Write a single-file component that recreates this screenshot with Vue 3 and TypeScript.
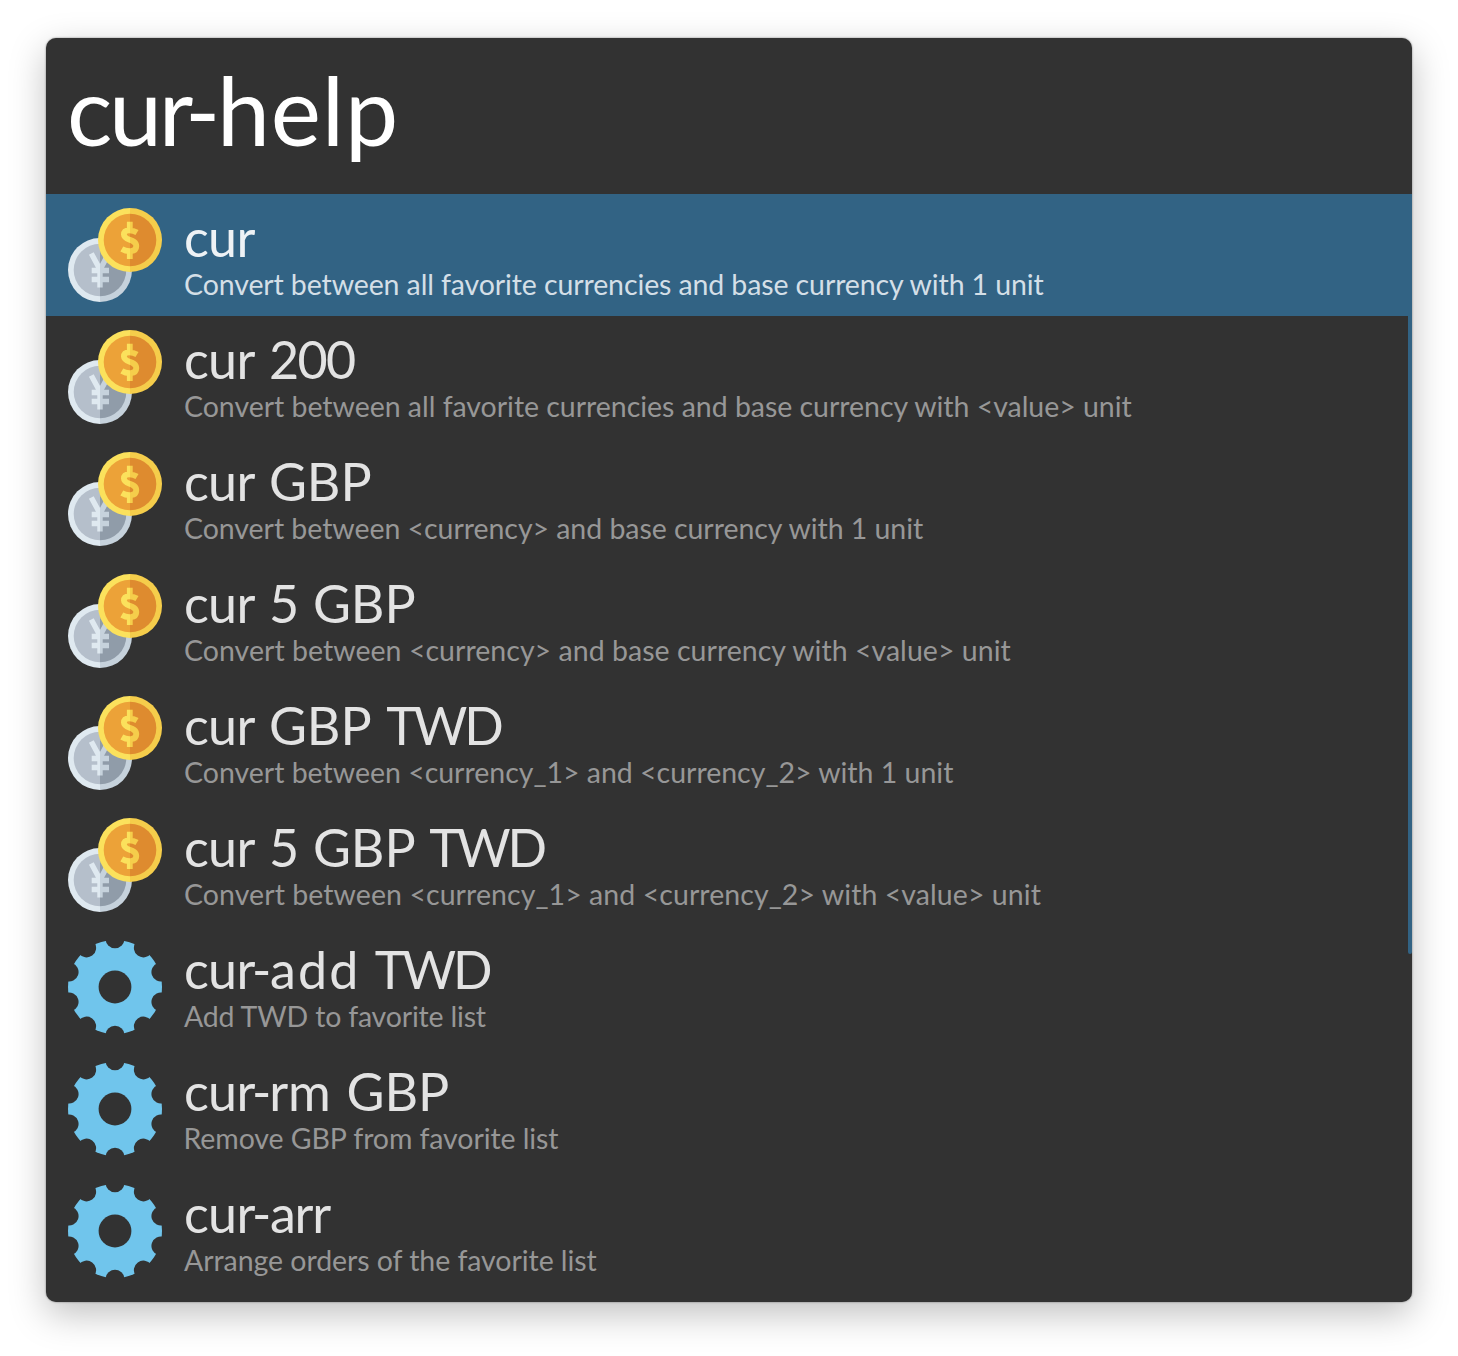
<script setup lang="ts">
/* A run of text with the left and right edge its ink should span, in pixels from the line start. */
type Run = [text: string, left: number, right: number]

interface Item {
  icon: 'coins' | 'gear'
  title: Run[]
  sub: Run
}

const FAMILY = 'Lato, "Liberation Sans", sans-serif'
const ctx = document.createElement('canvas').getContext('2d')!

/* Turns ink edges into a margin and a letter-spacing for each run. */
function fit(runs: Run[], size: number) {
  ctx.font = `${size}px ${FAMILY}`
  let cursor = 0
  return runs.map(([text, left, right]) => {
    const word = text.trimEnd()
    const ink = ctx.measureText(word)
    const bearing = -ink.actualBoundingBoxLeft
    const natural = ink.actualBoundingBoxRight - bearing
    const spacing = word.length > 1 ? (right - left - natural) / (word.length - 1) : 0
    const margin = left - bearing - cursor
    cursor += margin + ctx.measureText(text).width + spacing * text.length
    return { text, style: { marginLeft: `${margin.toFixed(2)}px`, letterSpacing: `${spacing.toFixed(3)}px` } }
  })
}

const query = fit([['cur', 2, 124.7], ['-', 122, 146], ['help', 155, 327]], 95)

const items: Item[] = [
  { icon: 'coins', title: [['cur', 2, 71.4]], sub: ['Convert between all favorite currencies and base currency with 1 unit', 1, 860.8] },
  { icon: 'coins', title: [['cur ', 2, 71.4], ['200', 88, 172]], sub: ['Convert between all favorite currencies and base currency with <value> unit', 1, 948.8] },
  { icon: 'coins', title: [['cur ', 2, 71.4], ['GBP', 88, 187.5]], sub: ['Convert between <currency> and base currency with 1 unit', 1, 740.3] },
  { icon: 'coins', title: [['cur ', 2, 71.4], ['5 ', 88, 112], ['GBP', 132, 231.5]], sub: ['Convert between <currency> and base currency with <value> unit', 1, 827.8] },
  { icon: 'coins', title: [['cur ', 2, 71.4], ['GBP ', 88, 187.5], ['TWD', 204.7, 320.7]], sub: ['Convert between <currency_1> and <currency_2> with 1 unit', 1, 769.7] },
  { icon: 'coins', title: [['cur ', 2, 71.4], ['5 ', 88, 112], ['GBP ', 132, 231.5], ['TWD', 247.7, 363.9]], sub: ['Convert between <currency_1> and <currency_2> with <value> unit', 1, 857.3] },
  { icon: 'gear', title: [['cur', 2, 71.4], ['-', 71, 84], ['add ', 86.9, 171.3], ['TWD', 190.7, 307]], sub: ['Add TWD to favorite list', 0, 302.7] },
  { icon: 'gear', title: [['cur', 2, 71.4], ['-', 71, 84], ['rm ', 88.3, 143.9], ['GBP', 164.4, 264]], sub: ['Remove GBP from favorite list', 1.5, 375.1] },
  { icon: 'gear', title: [['cur', 2, 71.4], ['-', 71, 84], ['arr', 86.9, 147.3]], sub: ['Arrange orders of the favorite list', 0, 413.1] },
]

const rows = items.map((item) => ({
  icon: item.icon,
  title: fit(item.title, 52),
  sub: fit([item.sub], 28.5),
}))

const notches = Array.from({ length: 10 }, (_, i) => i * 36)
</script>

<template>
  <main class="stage">
    <section class="panel">
      <header class="query"><span v-for="run in query" :key="run.text" :style="run.style">{{ run.text }}</span></header>
      <ul class="list">
        <li v-for="(row, i) in rows" :key="i" class="row" :class="{ selected: i === 0 }">
          <svg v-if="row.icon === 'coins'" class="icon" viewBox="0 0 94 94">
            <defs>
              <linearGradient id="silver-rim" gradientUnits="userSpaceOnUse" x1="0" x2="64" y1="0" y2="0"><stop offset=".5" stop-color="#dfe9f0" /><stop offset=".5" stop-color="#c6d2dc" /></linearGradient>
              <linearGradient id="silver-face" gradientUnits="userSpaceOnUse" x1="0" x2="64" y1="0" y2="0"><stop offset=".5" stop-color="#b5bfcb" /><stop offset=".5" stop-color="#909ca9" /></linearGradient>
              <linearGradient id="gold-rim" gradientUnits="userSpaceOnUse" x1="30" x2="94" y1="0" y2="0"><stop offset=".5" stop-color="#fbe15c" /><stop offset=".5" stop-color="#f5cd4b" /></linearGradient>
              <linearGradient id="gold-face" gradientUnits="userSpaceOnUse" x1="30" x2="94" y1="0" y2="0"><stop offset=".5" stop-color="#eca238" /><stop offset=".5" stop-color="#de8b2f" /></linearGradient>
            </defs>
            <circle cx="32" cy="62" r="32" fill="url(#silver-rim)" />
            <circle cx="32" cy="62" r="26.3" fill="url(#silver-face)" />
            <path d="M23.3 45.5 32 61.5 40.7 45.5M32 60V79.5M23.7 62.5H41M23.7 71.5H41" fill="none" stroke="url(#silver-rim)" stroke-width="5.4" />
            <circle cx="62" cy="32" r="32" fill="url(#gold-rim)" />
            <circle cx="62" cy="32" r="26.3" fill="url(#gold-face)" />
            <path d="M69 24.5C65 22 56 20.5 55.9 26.5C56 33 68 30.5 68.3 38C68.3 44.5 59 44 53.8 41M61.8 13.7V21M61.8 43V51" fill="none" stroke="url(#gold-rim)" stroke-width="5.8" />
          </svg>
          <svg v-else class="icon" viewBox="0 0 94 94">
            <mask id="gear-cut">
              <circle cx="47" cy="47" r="47" fill="#fff" />
              <circle cx="47" cy="47" r="16.4" fill="#000" />
              <circle v-for="a in notches" :key="a" cx="47" cy="-1.3" r="9.5" fill="#000" :transform="`rotate(${a} 47 47)`" />
            </mask>
            <rect width="94" height="94" fill="#70c5ec" mask="url(#gear-cut)" />
          </svg>
          <div class="copy">
            <div class="title"><span v-for="run in row.title" :key="run.text" :style="run.style">{{ run.text }}</span></div>
            <div class="sub"><span v-for="run in row.sub" :key="run.text" :style="run.style">{{ run.text }}</span></div>
          </div>
        </li>
      </ul>
      <div class="scroll"></div>
    </section>
  </main>
</template>

<style>
body { background: #fff; }
</style>

<style scoped>
.stage {
  box-sizing: border-box;
  width: 1458px;
  height: 1356px;
  padding: 38px 46px 54px;
  overflow: hidden;
  background: #fff;
  font-family: Lato, "Liberation Sans", sans-serif;
}
.panel {
  position: relative;
  height: 1264px;
  border-radius: 10px;
  overflow: hidden;
  background: #323232;
  box-shadow: 0 0 2px rgba(0, 0, 0, .5), 0 12px 36px rgba(0, 0, 0, .25);
}
.query {
  box-sizing: border-box;
  height: 156px;
  padding-left: 22px;
  color: #fff;
  font-size: 95px;
  line-height: 143px;
  white-space: pre;
}
.list { margin: 0; padding: 0; list-style: none; }
.row {
  display: flex;
  align-items: center;
  box-sizing: border-box;
  height: 122px;
  padding-left: 22px;
  white-space: pre;
}
.selected { background: #326384; }
.icon { flex: none; width: 94px; height: 94px; margin-right: 22px; }
.title { font-size: 52px; line-height: 56px; color: #e3e3e3; }
.sub { margin-top: 2px; font-size: 28.5px; line-height: 34px; color: #979797; }
.selected .title { color: #eef2f5; }
.selected .sub { color: #d4dfe7; }
.scroll {
  position: absolute;
  top: 278px;
  right: 0;
  width: 4px;
  height: 638px;
  border-radius: 0 0 2px 2px;
  background: #326384;
}
</style>
